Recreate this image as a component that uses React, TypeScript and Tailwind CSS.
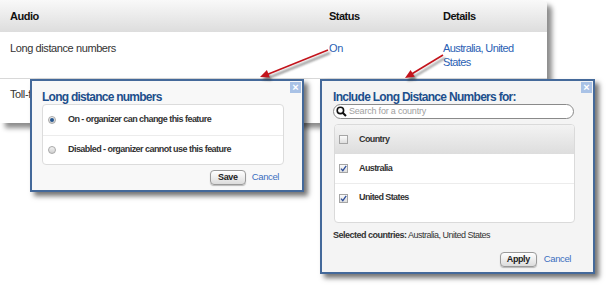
import type { ReactNode } from "react";

function CloseBox() {
  return (
    <div className="absolute right-[1px] top-[1px] flex size-[11px] items-center justify-center bg-[#a9c2e6] text-[11px] font-bold leading-none text-white">
      ×
    </div>
  );
}

function Radio({ on }: { on?: boolean }) {
  return (
    <span className="flex size-[8px] shrink-0 items-center justify-center rounded-full border border-[#a8a8a8] bg-gradient-to-b from-[#f2f2f2] to-[#cfcfcf]">
      {on && <span className="size-[4px] rounded-full bg-[#24568f]" />}
    </span>
  );
}

function Check({ on }: { on?: boolean }) {
  return (
    <span className="flex size-[9px] shrink-0 items-center justify-center border border-[#a5a5a5] bg-gradient-to-b from-[#fbfbfb] to-[#dedede]">
      {on && (
        <svg width="7" height="7" viewBox="0 0 7 7">
          <path d="M1 3.6 L2.8 5.6 L6.2 0.8" fill="none" stroke="#2f4f9a" strokeWidth="1.3" />
        </svg>
      )}
    </span>
  );
}

function Btn({ children }: { children: ReactNode }) {
  return (
    <span className="flex h-[15px] items-center justify-center rounded-[4px] border border-[#9a9a9a] bg-gradient-to-b from-white to-[#dcdcdc] text-[9px] font-bold tracking-[-0.4px] text-[#222] shadow-[0_1px_1px_rgba(0,0,0,0.25)]">
      {children}
    </span>
  );
}

function Arrows() {
  return (
    <svg className="pointer-events-none absolute inset-0" width="615" height="292">
      <defs>
        <filter id="soft" x="-20%" y="-20%" width="140%" height="140%">
          <feGaussianBlur stdDeviation="1.2" />
        </filter>
      </defs>
      <g filter="url(#soft)" opacity="0.55" transform="translate(2 3)">
        <line x1="328" y1="50" x2="266" y2="75" stroke="#333" strokeWidth="2" />
        <polygon points="260,77 269.8,77.4 266.9,70" fill="#333" />
        <line x1="443" y1="55" x2="410" y2="75" stroke="#333" strokeWidth="2" />
        <polygon points="405,78 414.8,76.8 410.6,69.9" fill="#333" />
      </g>
      <line x1="328" y1="50" x2="266" y2="75" stroke="#c3141c" strokeWidth="1.6" />
      <polygon points="260,77 269.8,77.4 266.9,70" fill="#c3141c" />
      <line x1="443" y1="55" x2="410" y2="75" stroke="#c3141c" strokeWidth="1.6" />
      <polygon points="405,78 414.8,76.8 410.6,69.9" fill="#c3141c" />
    </svg>
  );
}

export default function App() {
  return (
    <div className="relative h-[292px] w-[615px] overflow-hidden bg-white font-['Liberation_Sans',Arial,sans-serif]">
      {/* audio settings table */}
      <div className="w-[547px] rounded-tr-[5px] bg-white shadow-[5px_5px_5px_rgba(0,0,0,0.45)]">
        <div className="flex h-[32px] items-center rounded-tr-[5px] bg-gradient-to-b from-[#f9f9f9] to-[#dddddd] text-[11px] font-bold tracking-[-0.5px] text-[#111]">
          <div className="w-[320px] pl-[10px]">Audio</div>
          <div className="w-[113px] pl-[9px]">Status</div>
          <div className="pl-[10px]">Details</div>
        </div>
        <div className="flex h-[47px] border-b border-[#d8d8d8] pt-[9px] text-[11px] leading-[14px] tracking-[-0.4px] text-[#333]">
          <div className="w-[320px] pl-[10px]">Long distance numbers</div>
          <div className="w-[113px] pl-[9px] text-[#2b5fb4]">On</div>
          <div className="w-[100px] pl-[10px] tracking-[-0.6px] text-[#2b5fb4]">Australia, United States</div>
        </div>
        <div className="flex h-[44px] pt-[8px] text-[11px] leading-[14px] tracking-[-0.4px] text-[#333]">
          <div className="w-[320px] pl-[10px]">Toll-free numbers</div>
        </div>
      </div>

      {/* long distance popup */}
      <div className="absolute left-[30px] top-[79px] h-[113px] w-[274px] border-2 border-[#44699a] bg-[#f8f8f8] px-[10px] shadow-[4px_4px_5px_rgba(0,0,0,0.55)]">
        <CloseBox />
        <div className="pt-[9px] text-[12px] font-bold leading-[14px] tracking-[-0.75px] text-[#1d4f8c]">
          Long distance numbers
        </div>
        <div className="w-[242px] rounded-[4px] border border-[#dcdcdc] bg-white text-[9px] font-bold tracking-[-0.55px] text-[#333]">
          <div className="flex h-[30px] items-center gap-[12px] pl-[5px]">
            <Radio on />
            <span>On - organizer can change this feature</span>
          </div>
          <div className="flex h-[29px] items-center gap-[12px] border-t border-[#ececec] pl-[5px]">
            <Radio />
            <span>Disabled - organizer cannot use this feature</span>
          </div>
        </div>
        <div className="mt-[5px] flex items-center justify-end gap-[6px] pr-[13px]">
          <div className="w-[36px]">
            <Btn>Save</Btn>
          </div>
          <span className="text-[9.5px] tracking-[-0.4px] text-[#3b6fc0]">Cancel</span>
        </div>
      </div>

      {/* country popup */}
      <div className="absolute left-[320px] top-[79px] h-[195px] w-[275px] border-2 border-[#44699a] bg-[#f4f4f4] px-[11px] shadow-[4px_4px_5px_rgba(0,0,0,0.55)]">
        <CloseBox />
        <div className="pt-[9px] text-[12px] font-bold leading-[14px] tracking-[-0.7px] text-[#1d4f8c]">
          Include Long Distance Numbers for:
        </div>
        <div className="flex h-[15px] w-[241px] items-center gap-[2px] rounded-full border border-[#8a8a8a] bg-white pl-[2px]">
          <svg width="11" height="11" viewBox="0 0 11 11">
            <circle cx="4.4" cy="4.4" r="3.2" fill="none" stroke="#111" strokeWidth="1.6" />
            <line x1="6.7" y1="6.7" x2="10" y2="10" stroke="#111" strokeWidth="2" />
          </svg>
          <span className="text-[9px] tracking-[-0.2px] text-[#a0a0a0]">Search for a country</span>
        </div>
        <div className="ml-[1px] mt-[5px] h-[99px] w-[241px] overflow-hidden rounded-[4px] border border-[#dadada] bg-white text-[9px] font-bold tracking-[-0.6px] text-[#333]">
          <div className="flex h-[29px] items-center gap-[11px] bg-gradient-to-b from-[#f3f3f3] to-[#dddddd] pl-[4px]">
            <Check />
            <span>Country</span>
          </div>
          <div className="flex h-[29px] items-center gap-[11px] pl-[4px]">
            <Check on />
            <span>Australia</span>
          </div>
          <div className="flex h-[29px] items-center gap-[11px] border-t border-[#ececec] pl-[4px]">
            <Check on />
            <span>United States</span>
          </div>
        </div>
        <div className="mt-[6px] text-[9px] leading-[13px] tracking-[-0.5px] text-[#333]">
          <span className="font-bold">Selected countries:</span> Australia, United States
        </div>
        <div className="mt-[10px] flex items-center justify-end gap-[7px] pr-[11px]">
          <div className="w-[37px]">
            <Btn>Apply</Btn>
          </div>
          <span className="text-[9.5px] tracking-[-0.4px] text-[#3b6fc0]">Cancel</span>
        </div>
      </div>

      <Arrows />
    </div>
  );
}
